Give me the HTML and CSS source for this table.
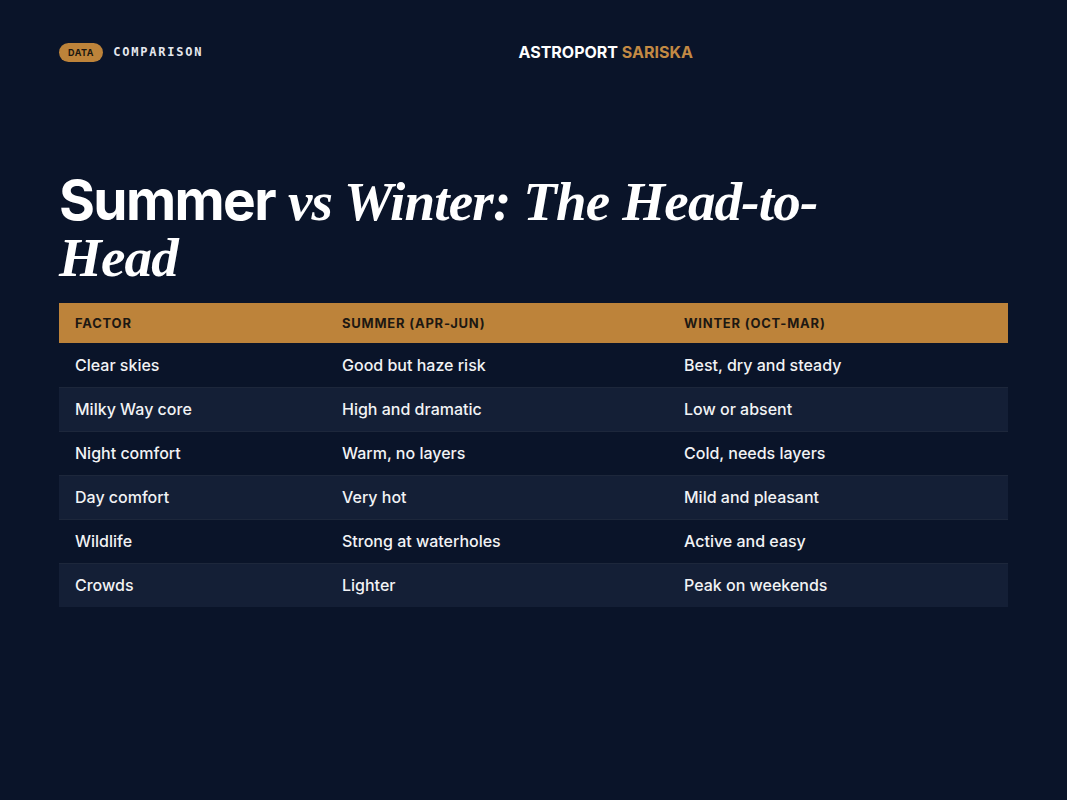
FILE: index.html
```html
<!DOCTYPE html>
<html lang="en">
<head>
<meta charset="utf-8">
<title>Summer vs Winter</title>
<link rel="stylesheet" href="styles.css">
</head>
<body>
<div class="page">
  <header class="topbar">
    <div class="tag-group">
      <span class="pill">DATA</span>
      <span class="section">COMPARISON</span>
    </div>
    <div class="brand">ASTROPORT <span class="accent">SARISKA</span></div>
    <div class="spacer"></div>
  </header>

  <h1 class="title"><span class="sans">Summer</span> <em class="serif">vs Winter: The Head-to-Head</em></h1>

  <table class="compare">
    <thead>
      <tr><th class="c1">Factor</th><th class="c2">Summer (Apr-Jun)</th><th class="c3">Winter (Oct-Mar)</th></tr>
    </thead>
    <tbody>
      <tr><td>Clear skies</td><td>Good but haze risk</td><td>Best, dry and steady</td></tr>
      <tr><td>Milky Way core</td><td>High and dramatic</td><td>Low or absent</td></tr>
      <tr><td>Night comfort</td><td>Warm, no layers</td><td>Cold, needs layers</td></tr>
      <tr><td>Day comfort</td><td>Very hot</td><td>Mild and pleasant</td></tr>
      <tr><td>Wildlife</td><td>Strong at waterholes</td><td>Active and easy</td></tr>
      <tr><td>Crowds</td><td>Lighter</td><td>Peak on weekends</td></tr>
    </tbody>
  </table>
</div>
</body>
</html>
```
FILE: styles.css
```css
* { box-sizing: border-box; }
html, body {
  margin: 0;
  padding: 0;
  background: #0a1429;
}
body {
  font-family: Inter, "Noto Sans", sans-serif;
  color: #f4f4f4;
  width: 1067px;
  height: 800px;
}
.page {
  padding: 42px 59px 0 59px;
}
.topbar {
  display: flex;
  justify-content: space-between;
  align-items: center;
  height: 20px;
}
.tag-group {
  display: flex;
  align-items: center;
  gap: 10px;
}
.pill {
  background: #bd833a;
  color: #1b160f;
  font-size: 9px;
  font-weight: 700;
  letter-spacing: 0.06em;
  height: 19px;
  line-height: 19px;
  padding: 0 9px;
  border-radius: 10px;
}
.section {
  font-family: "DejaVu Sans Mono", "Liberation Mono", monospace;
  font-size: 12px;
  font-weight: 700;
  letter-spacing: 1.8px;
  color: #e6e8ee;
}
.brand {
  font-size: 16px;
  font-weight: 700;
  letter-spacing: 0;
  color: #ffffff;
}
.brand .accent { color: #c38a44; }
.spacer { width: 0; }

.title {
  margin: 111px 0 0 0;
  width: 800px;
  font-size: 55px;
  line-height: 54px;
  font-weight: 700;
  color: #ffffff;
}
.title .sans {
  font-family: Inter, sans-serif;
  font-weight: 700;
  letter-spacing: -0.03em;
}
.title .serif {
  font-family: "Liberation Serif", serif;
  font-style: italic;
  font-weight: 700;
  letter-spacing: -0.015em;
}

.compare {
  margin-top: 18px;
  width: 949px;
  border-collapse: collapse;
  table-layout: fixed;
}
.compare th, .compare td {
  text-align: left;
  padding: 0 16px;
}
.compare .c1 { width: 267px; }
.compare .c2 { width: 342px; }
.compare .c3 { width: 340px; }
.compare thead tr {
  background: #bd833a;
  height: 40px;
}
.compare th {
  font-size: 13px;
  font-weight: 700;
  letter-spacing: 0.06em;
  text-transform: uppercase;
  color: #1d1812;
}
.compare tbody tr {
  height: 44px;
  border-bottom: 1px solid #1d273b;
}
.compare tbody tr:nth-child(even) {
  background: #141f36;
}
.compare tbody tr:last-child { border-bottom: none; }
.compare td {
  font-size: 16px;
  font-weight: 500;
  color: #f2f3f5;
}
```
